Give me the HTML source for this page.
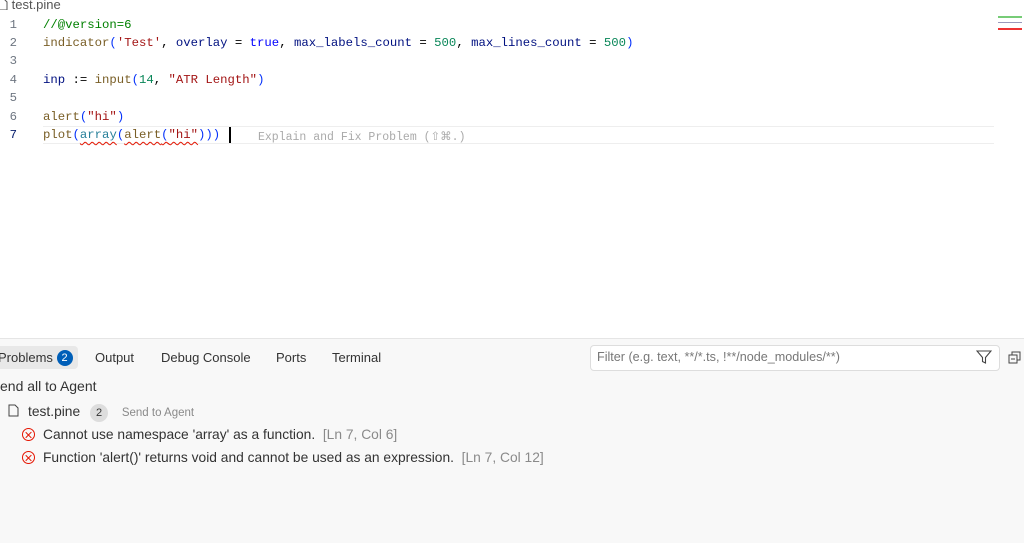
<!DOCTYPE html>
<html><head><meta charset="utf-8"><style>
body{margin:0;width:1024px;height:542px;overflow:hidden;background:#fff;font-family:"Liberation Sans",sans-serif;position:relative}
.mono{font-family:"Liberation Mono",monospace;font-size:12.3px;white-space:pre}
.ln{position:absolute;left:0;width:17px;text-align:right;color:#6e7681;font-family:"Liberation Mono",monospace;font-size:12.3px}
.code{position:absolute;left:43px}
.c{color:#008000}.f{color:#795e26}.s{color:#a31515}.k{color:#0000ff}.v{color:#001080}.n{color:#098658}.p{color:#0431fa}.t{color:#267f99}
.sq{text-decoration:underline wavy #e51400;text-underline-offset:3px;text-decoration-thickness:1px}
.panel{position:absolute;left:0;top:338px;width:1024px;height:204px;background:#f8f8f8;border-top:1px solid #e5e5e5}
.tab{position:absolute;top:11px;font-size:13px;color:#333}
.row{position:absolute;font-size:13.8px;color:#333;white-space:nowrap}
.err{display:inline-block;width:11px;height:11px;border:1.3px solid #e51400;border-radius:50%;position:relative;vertical-align:-2px;margin-right:8px}
.err:before,.err:after{content:"";position:absolute;left:5px;top:1.5px;width:1.3px;height:8px;background:#e51400;transform:rotate(45deg)}
.err:after{transform:rotate(-45deg)}
.gray{color:#8a8a8a}
</style></head><body>
<div style="position:absolute;left:-2px;top:-3px;font-size:13px;color:#555"><svg width="10" height="12" style="vertical-align:-1px"><path d="M1 1h5l3 3v8H1z" fill="none" stroke="#555"/></svg> test.pine</div>
<div class="ln" style="top:18px">1</div><div class="code mono" style="top:18px"><span class="c">//@version=6</span></div>
<div class="ln" style="top:36px">2</div><div class="code mono" style="top:36px"><span class="f">indicator</span><span class="p">(</span><span class="s">'Test'</span>, <span class="v">overlay</span> = <span class="k">true</span>, <span class="v">max_labels_count</span> = <span class="n">500</span>, <span class="v">max_lines_count</span> = <span class="n">500</span><span class="p">)</span></div>
<div class="ln" style="top:54px">3</div>
<div class="ln" style="top:73px">4</div><div class="code mono" style="top:73px"><span class="v">inp</span> := <span class="f">input</span><span class="p">(</span><span class="n">14</span>, <span class="s">"ATR Length"</span><span class="p">)</span></div>
<div class="ln" style="top:91px">5</div>
<div style="position:absolute;left:43px;top:126px;width:951px;height:16px;border-top:1px solid #eee;border-bottom:1px solid #eee"></div>
<div class="ln" style="top:110px">6</div><div class="code mono" style="top:110px"><span class="f">alert</span><span class="p">(</span><span class="s">"hi"</span><span class="p">)</span></div>
<div class="ln" style="top:128px;color:#0b216f">7</div><div class="code mono" style="top:128px"><span class="f">plot</span><span class="p">(</span><span class="sq"><span class="t">array</span></span><span class="p">(</span><span class="sq"><span class="f">alert</span><span class="p">(</span><span class="s">"hi"</span></span><span class="p">)))</span></div>
<div style="position:absolute;left:229px;top:127px;width:2px;height:16px;background:#000"></div>
<div class="mono" style="position:absolute;left:258px;top:129px;color:#aaa;font-size:11.5px">Explain and Fix Problem (⇧⌘.)</div>
<div style="position:absolute;left:998px;top:16px;width:24px;height:2px;background:#7c7"></div>
<div style="position:absolute;left:998px;top:22px;width:24px;height:1px;background:#99b"></div>
<div style="position:absolute;left:998px;top:28px;width:24px;height:2px;background:#e33"></div>
<div class="panel">
<div style="position:absolute;left:-4px;top:7px;width:82px;height:23px;background:#e8e8e8;border-radius:4px"></div>
<div class="tab" style="left:-2px">Problems <span style="display:inline-block;width:16px;height:16px;border-radius:50%;background:#005fb8;color:#fff;font-size:11px;text-align:center;line-height:16px;vertical-align:1px">2</span></div>
<div class="tab" style="left:95px">Output</div>
<div class="tab" style="left:161px">Debug Console</div>
<div class="tab" style="left:276px">Ports</div>
<div class="tab" style="left:332px">Terminal</div>
<div style="position:absolute;left:590px;top:6px;width:408px;height:24px;background:#fff;border:1px solid #ddd;border-radius:4px"></div>
<div style="position:absolute;left:597px;top:11px;font-size:12.6px;color:#777">Filter (e.g. text, **/*.ts, !**/node_modules/**)</div>
<svg style="position:absolute;left:976px;top:11px" width="16" height="14"><path d="M1 1h14l-5.5 6.5V13l-3-1.5V7.5z" fill="none" stroke="#444" stroke-width="1.1"/></svg>
<svg style="position:absolute;left:1008px;top:12px" width="14" height="14"><rect x="1" y="4" width="8" height="8" fill="none" stroke="#444"/><path d="M4 4V1h8v8H9M3 8h4" fill="none" stroke="#444"/></svg>
<div class="row" style="left:0;top:39px;font-size:14px">end all to Agent</div>
<div class="row" style="left:8px;top:65px"><svg width="11" height="13" style="vertical-align:-1px;margin-right:9px"><path d="M1 1h6l3 3v8H1z" fill="none" stroke="#444"/></svg>test.pine <span style="display:inline-block;width:18px;height:18px;border-radius:50%;background:#ddd;font-size:11px;text-align:center;line-height:18px;margin-left:6px;vertical-align:0">2</span> <span class="gray" style="font-size:11.5px;margin-left:10px">Send to Agent</span></div>
<div class="row" style="left:22px;top:88px"><span class="err"></span>Cannot use namespace 'array' as a function. &nbsp;<span class="gray">[Ln 7, Col 6]</span></div>
<div class="row" style="left:22px;top:111px"><span class="err"></span>Function 'alert()' returns void and cannot be used as an expression. &nbsp;<span class="gray">[Ln 7, Col 12]</span></div>
</div>
</body></html>
